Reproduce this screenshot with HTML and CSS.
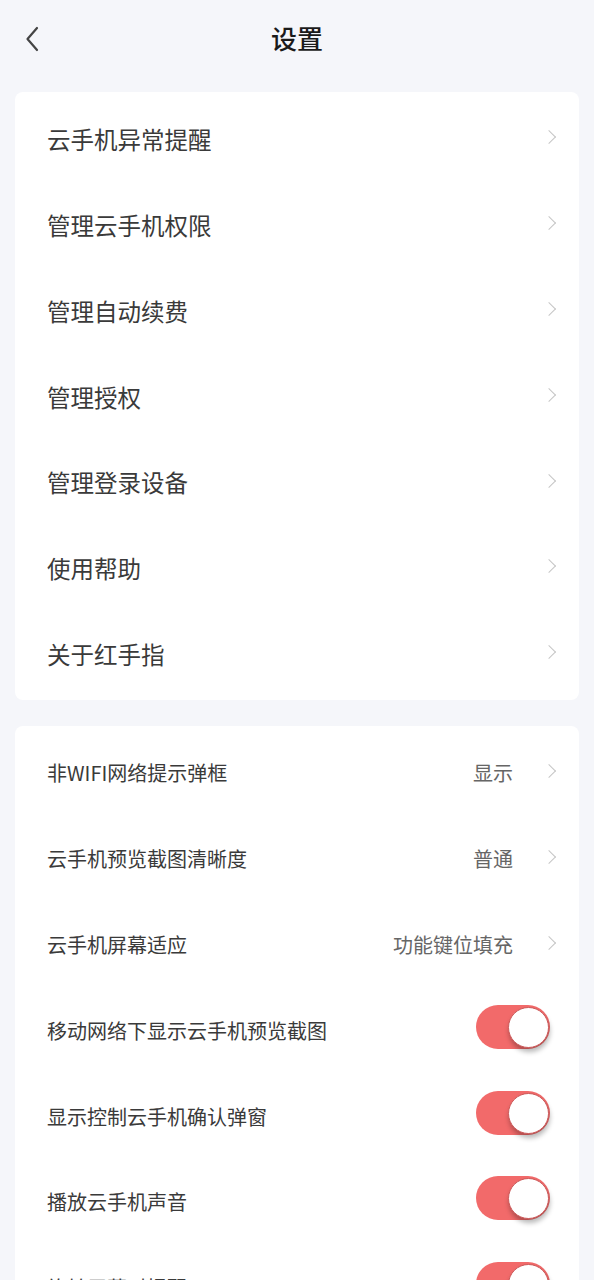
FILE: index.html
```html
<!DOCTYPE html>
<html lang="zh-CN">
<head>
<meta charset="utf-8">
<title>设置</title>
<link rel="stylesheet" href="styles.css">
</head>
<body>
<div class="page">
  <header class="topbar">
    <span class="back">
      <svg width="14" height="26" viewBox="0 0 14 26"><path d="M12 2 L2.5 13 L12 24" fill="none" stroke="#444" stroke-width="2.2" stroke-linecap="round" stroke-linejoin="round"/></svg>
    </span>
    <h1 class="title">设置</h1>
  </header>

  <section class="card card-main">
    <div class="row"><span class="label">云手机异常提醒</span><span class="chev"></span></div>
    <div class="row"><span class="label">管理云手机权限</span><span class="chev"></span></div>
    <div class="row"><span class="label">管理自动续费</span><span class="chev"></span></div>
    <div class="row"><span class="label">管理授权</span><span class="chev"></span></div>
    <div class="row"><span class="label">管理登录设备</span><span class="chev"></span></div>
    <div class="row"><span class="label">使用帮助</span><span class="chev"></span></div>
    <div class="row"><span class="label">关于红手指</span><span class="chev"></span></div>
  </section>

  <section class="card card-opts">
    <div class="row"><span class="label">非WIFI网络提示弹框</span><span class="value">显示</span><span class="chev"></span></div>
    <div class="row"><span class="label">云手机预览截图清晰度</span><span class="value">普通</span><span class="chev"></span></div>
    <div class="row"><span class="label">云手机屏幕适应</span><span class="value">功能键位填充</span><span class="chev"></span></div>
    <div class="row"><span class="label">移动网络下显示云手机预览截图</span><span class="switch"><span class="knob"></span></span></div>
    <div class="row"><span class="label">显示控制云手机确认弹窗</span><span class="switch"><span class="knob"></span></span></div>
    <div class="row"><span class="label">播放云手机声音</span><span class="switch"><span class="knob"></span></span></div>
    <div class="row"><span class="label">旋转屏幕时提醒</span><span class="switch"><span class="knob"></span></span></div>
  </section>
</div>
</body>
</html>
```

FILE: styles.css
```css
* { box-sizing: border-box; }
html, body {
  margin: 0;
  padding: 0;
  background: #f5f6fa;
  font-family: "Noto Sans CJK SC", "Noto Sans", sans-serif;
  color: #333;
}
.page {
  width: 594px;
  height: 1280px;
  overflow: hidden;
  padding: 0 15px;
}
.topbar {
  height: 84px;
  display: flex;
  align-items: center;
  justify-content: center;
  position: relative;
  margin-bottom: 8px;
}
.back {
  position: absolute;
  left: 10px;
  top: 26px;
  width: 14px;
  height: 26px;
  display: block;
}
.back svg { display: block; }
.title {
  margin: 0;
  font-size: 26px;
  font-weight: 500;
  color: #1a1a1a;
  line-height: 1;
  transform: translateY(-4px);
}
.card {
  background: #fff;
  border-radius: 8px;
  padding: 5px 0 2px;
}
.card + .card { margin-top: 26px; }
.row {
  height: 85.8px;
  display: flex;
  align-items: center;
  padding: 0 24px 0 32px;
}
.label {
  flex: 1;
  font-size: 23.5px;
  color: #3a3a3a;
  line-height: 1;
}
.card-opts .label { font-size: 20px; }
.value {
  font-size: 20px;
  color: #666;
  line-height: 1;
  margin-right: 34px;
}
.chev {
  width: 8px;
  height: 15px;
  margin-top: -5px;
  position: relative;
}
.chev::before {
  content: "";
  position: absolute;
  left: -3px;
  top: 2.5px;
  width: 9px;
  height: 9px;
  border-top: 1.6px solid #c6c6c6;
  border-right: 1.6px solid #c6c6c6;
  transform: rotate(45deg);
}
.switch {
  width: 74px;
  height: 44px;
  border-radius: 22px;
  background: #f26a6a;
  position: relative;
  margin-right: 5px;
  margin-top: -8px;
}
.knob {
  position: absolute;
  right: 1px;
  top: 2px;
  width: 41px;
  height: 41px;
  border-radius: 50%;
  background: #fff;
  border: 1.5px solid #cc5a5a;
  box-shadow: 1px 4px 5px rgba(0,0,0,0.28);
}
```
